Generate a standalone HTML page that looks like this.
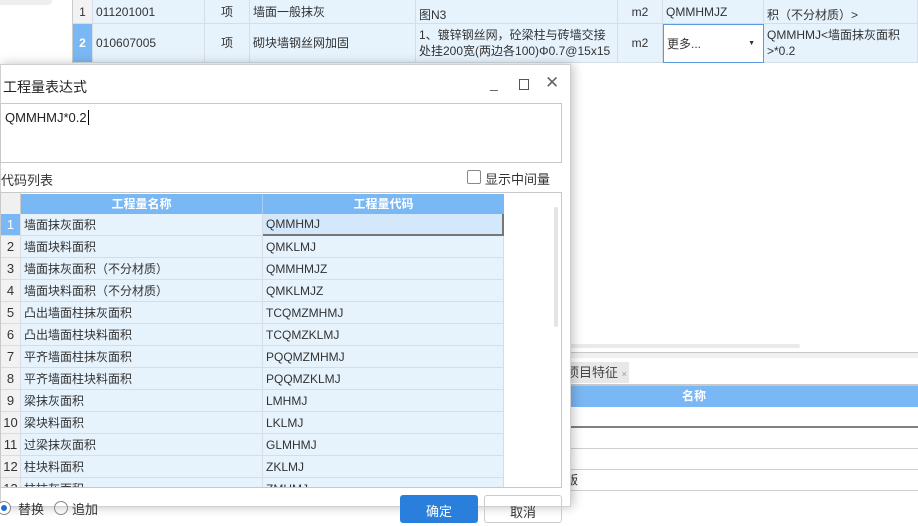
<!DOCTYPE html>
<html><head><meta charset="utf-8"><style>
*{box-sizing:border-box;margin:0;padding:0}
body{width:918px;height:507px;overflow:hidden;background:#fff;font-family:"Liberation Sans","Noto Sans CJK SC",sans-serif;font-size:12px;color:#333;position:relative}
.a{position:absolute}
.cell{position:absolute;display:flex;align-items:center;border-right:1px solid #d6dde4;border-bottom:1px solid #d6dde4;padding-left:3px;background:#e6f3fd;line-height:16px}
</style></head><body>
<div class="a" style="left:0;top:0;width:73px;height:63px;background:#fff"></div>
<div class="a" style="left:0;top:0;width:52px;height:5px;background:#eee;border-radius:0 0 4px 0"></div>
<div class="a" style="left:72px;top:0;width:1px;height:63px;background:#ccc"></div>
<div class="cell" style="left:73px;top:0;width:20px;height:24px;justify-content:center;padding:0;background:#f2f2f2">1</div>
<div class="cell" style="left:93px;top:0;width:112px;height:24px">011201001</div>
<div class="cell" style="left:205px;top:0;width:45px;height:24px;justify-content:center;padding:0">项</div>
<div class="cell" style="left:250px;top:0;width:166px;height:24px">墙面一般抹灰</div>
<div class="cell" style="left:416px;top:0;width:202px;height:24px;align-items:flex-end">图N3</div>
<div class="cell" style="left:618px;top:0;width:45px;height:24px;justify-content:center;padding:0">m2</div>
<div class="cell" style="left:663px;top:0;width:101px;height:24px">QMMHMJZ</div>
<div class="cell" style="left:764px;top:0;width:154px;height:24px;align-items:flex-end">积（不分材质）&gt;</div>
<div class="cell" style="left:73px;top:24px;width:20px;height:39px;justify-content:center;padding:0;background:#7ab8f5;color:#fff;font-weight:bold">2</div>
<div class="cell" style="left:93px;top:24px;width:112px;height:39px">010607005</div>
<div class="cell" style="left:205px;top:24px;width:45px;height:39px;justify-content:center;padding:0">项</div>
<div class="cell" style="left:250px;top:24px;width:166px;height:39px">砌块墙钢丝网加固</div>
<div class="cell" style="left:416px;top:24px;width:202px;height:39px;font-size:12px">1、镀锌钢丝网，砼梁柱与砖墙交接处挂200宽(两边各100)Φ0.7@15x15</div>
<div class="cell" style="left:618px;top:24px;width:45px;height:39px;justify-content:center;padding:0">m2</div>
<div class="cell" style="left:663px;top:24px;width:101px;height:39px;background:#fff;border:1px solid #5a9be0">更多...<span style="position:absolute;right:8px;font-size:7px">▼</span></div>
<div class="cell" style="left:764px;top:24px;width:154px;height:39px">QMMHMJ&lt;墙面抹灰面积&gt;*0.2</div>
<div class="a" style="left:570px;top:344px;width:230px;height:4px;background:#eaeaea;border-radius:2px"></div>
<div class="a" style="left:570px;top:352px;width:348px;height:1px;background:#c8c8c8"></div>
<div class="a" style="left:570px;top:353px;width:348px;height:5px;background:#f0f0f0"></div>
<div class="a" style="left:566px;top:362px;width:63px;height:21px;background:#e8e8e8;font-size:13px;line-height:21px;color:#444">项目特征 <span style="font-size:9px;color:#999">×</span></div>
<div class="a" style="left:570px;top:384px;width:348px;height:2px;background:#c8c8c8"></div>
<div class="a" style="left:570px;top:386px;width:348px;height:21px;background:#7ab8f5;color:#fff;font-weight:bold;text-align:center;line-height:21px;padding-right:100px">名称</div>
<div class="a" style="left:570px;top:426px;width:348px;height:2px;background:#808080"></div>
<div class="a" style="left:570px;top:448px;width:348px;height:1px;background:#d0d0d0"></div>
<div class="a" style="left:570px;top:469px;width:348px;height:1px;background:#d0d0d0"></div>
<div class="a" style="left:570px;top:490px;width:348px;height:1px;background:#d0d0d0"></div>
<div class="a" style="left:566px;top:471px;font-size:12px">版</div>
<div class="a" style="left:0;top:64px;width:571px;height:443px;background:#fff;border:1px solid #d0d0d0;box-shadow:2px 0 10px rgba(0,0,0,.25)">
 <div class="a" style="left:2px;top:12px;font-size:14px;color:#222">工程量表达式</div>
 <div class="a" style="left:489px;top:10px;font-size:14px;color:#555">_</div>
 <div class="a" style="left:518px;top:14px;width:10px;height:11px;border:1px solid #555"></div>
 <div class="a" style="left:544px;top:8px;font-size:17px;color:#666">✕</div>
 <div class="a" style="left:-1px;top:38px;width:562px;height:60px;border:1px solid #c8c8c8;padding:6px 4px;font-size:13px;color:#222">QMMHMJ*0.2<span style="border-left:1px solid #000;margin-left:1px"></span></div>
 <div class="a" style="left:0;top:105px;font-size:13px">代码列表</div>
 <div class="a" style="left:466px;top:105px;width:14px;height:14px;border:1px solid #888;border-radius:2px"></div>
 <div class="a" style="left:484px;top:104px;font-size:13px">显示中间量</div>
 <div class="a" style="left:-1px;top:127px;width:562px;height:296px;border:1px solid #c8c8c8;overflow:hidden">
  <div class="a" style="left:0;top:0;width:20px;height:21px;background:#f0f0f0;border-right:1px solid #ccc"></div>
  <div class="a" style="left:20px;top:1px;width:242px;height:20px;background:#7ab8f5;color:#fff;font-weight:bold;text-align:center;line-height:20px;border-right:1px solid #a8cef5">工程量名称</div>
  <div class="a" style="left:262px;top:1px;width:241px;height:20px;background:#7ab8f5;color:#fff;font-weight:bold;text-align:center;line-height:20px">工程量代码</div>
  <div class="a" style="left:553px;top:14px;width:4px;height:120px;background:#e4e4e4;border-radius:2px"></div>
  <div id="rows"></div>
 </div>
 <div class="a" style="left:-4px;top:436px;width:14px;height:14px;border:1px solid #888;border-radius:50%;background:#fff"><div style="margin:3px;width:6px;height:6px;border-radius:50%;background:#1e6fd0"></div></div>
 <div class="a" style="left:17px;top:434px;font-size:13px">替换</div>
 <div class="a" style="left:53px;top:436px;width:14px;height:14px;border:1px solid #888;border-radius:50%"></div>
 <div class="a" style="left:71px;top:434px;font-size:13px">追加</div>
 <div class="a" style="left:399px;top:430px;width:78px;height:28px;background:#2b7fdc;border-radius:3px;color:#fff;text-align:center;line-height:26px;padding-top:4px;font-size:13px">确定</div>
 <div class="a" style="left:483px;top:430px;width:78px;height:28px;border:1px solid #ccc;border-radius:3px;text-align:center;line-height:26px;padding-top:4px;font-size:13px">取消</div>
</div>
<script>
var d=[["墙面抹灰面积","QMMHMJ"],["墙面块料面积","QMKLMJ"],["墙面抹灰面积（不分材质）","QMMHMJZ"],["墙面块料面积（不分材质）","QMKLMJZ"],["凸出墙面柱抹灰面积","TCQMZMHMJ"],["凸出墙面柱块料面积","TCQMZKLMJ"],["平齐墙面柱抹灰面积","PQQMZMHMJ"],["平齐墙面柱块料面积","PQQMZKLMJ"],["梁抹灰面积","LMHMJ"],["梁块料面积","LKLMJ"],["过梁抹灰面积","GLMHMJ"],["柱块料面积","ZKLMJ"],["柱抹灰面积","ZMHMJ"]];
var h="";d.forEach(function(r,i){var t=21+i*22;var sel=i==0;
h+='<div class="cell" style="left:0;top:'+t+'px;width:20px;height:22px;justify-content:center;padding:0;font-size:13px;background:'+(sel?'#7ab8f5;color:#fff':'#f2f2f2')+'">'+(i+1)+'</div>';
h+='<div class="cell" style="left:20px;top:'+t+'px;width:242px;height:22px;font-size:12px">'+r[0]+'</div>';
h+='<div class="cell" style="left:262px;top:'+t+'px;width:241px;height:22px;font-size:12px;'+(sel?'background:#d3e8fb;border-right:2px solid #777;border-bottom:2px solid #777':'')+'">'+r[1]+'</div>';});
document.getElementById("rows").innerHTML=h;
</script>
</body></html>
